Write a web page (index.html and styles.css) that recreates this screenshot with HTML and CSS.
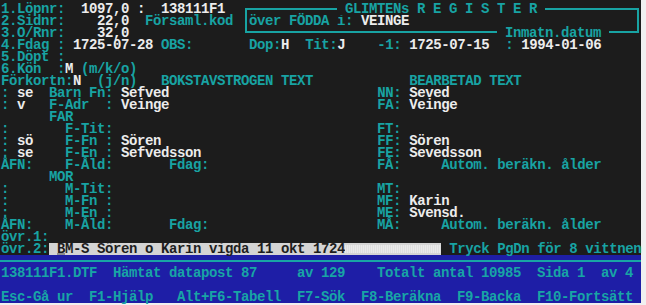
FILE: index.html
```
<!DOCTYPE html>
<html lang="sv">
<head>
<meta charset="utf-8">
<title>GLIMTENs REGISTER</title>
<link rel="stylesheet" href="styles.css">
</head>
<body>
<div class="screen">
  <div class="main">
    <div class="top">
      <div class="left">
        <div class="row"><span class="c">1.Löpnr:</span>  <span class="w">1097,0 :  138111F1</span></div>
        <div class="row"><span class="c">2.Sidnr:</span>    <span class="w">22,0</span>  <span class="c">Församl.kod</span></div>
        <div class="row"><span class="c">3.O/Rnr:</span>    <span class="w">32,0</span></div>
      </div>
      <div class="box">
        <span class="legend title"> GLIMTENs R E G I S T E R </span>
        <div class="row"><span class="c">över FÖDDA i: </span><span class="w">VEINGE</span></div>
        <span class="legend date"> Inmatn.datum </span>
      </div>
    </div>
    <div class="row"><span class="c">4.Fdag : </span><span class="w">1725-07-28</span> <span class="c">OBS:</span>       <span class="c">Dop:</span><span class="w">H</span>  <span class="c">Tit:</span><span class="w">J</span>    <span class="c">-1:</span> <span class="w">1725-07-15</span>  <span class="c">:</span> <span class="w">1994-01-06</span></div>
    <div class="row"><span class="c">5.Döpt :</span></div>
    <div class="row"><span class="c">6.Kön  :</span><span class="w">M</span> <span class="c">(m/k/o)</span></div>
    <div class="row"><span class="c">Förkortn:</span><span class="w">N</span>  <span class="c">(j/n)</span>   <span class="c">BOKSTAVSTROGEN TEXT</span>            <span class="c">BEARBETAD TEXT</span></div>
    <div class="row"><span class="c">:</span> <span class="w">se</span>  <span class="c">Barn Fn:</span> <span class="w">Sefved</span>                          <span class="c">NN:</span> <span class="w">Seved</span></div>
    <div class="row"><span class="c">:</span> <span class="w">v</span>   <span class="c">F-Adr  :</span> <span class="w">Veinge</span>                          <span class="c">FA:</span> <span class="w">Veinge</span></div>
    <div class="row">      <span class="c">FAR</span></div>
    <div class="row"><span class="c">:</span>       <span class="c">F-Tit:</span>                                 <span class="c">FT:</span></div>
    <div class="row"><span class="c">:</span> <span class="w">sö</span>    <span class="c">F-Fn :</span> <span class="w">Sören</span>                           <span class="c">FF:</span> <span class="w">Sören</span></div>
    <div class="row"><span class="c">:</span> <span class="w">se</span>    <span class="c">F-En :</span> <span class="w">Sefvedsson</span>                      <span class="c">FE:</span> <span class="w">Sevedsson</span></div>
    <div class="row"><span class="c">ÅFN:</span>    <span class="c">F-Åld:</span>       <span class="c">Fdag:</span>                     <span class="c">FÅ:</span>     <span class="c">Autom. beräkn. ålder</span></div>
    <div class="row">      <span class="c">MOR</span></div>
    <div class="row"><span class="c">:</span>       <span class="c">M-Tit:</span>                                 <span class="c">MT:</span></div>
    <div class="row"><span class="c">:</span>       <span class="c">M-Fn :</span>                                 <span class="c">MF:</span> <span class="w">Karin</span></div>
    <div class="row"><span class="c">:</span>       <span class="c">M-En :</span>                                 <span class="c">ME:</span> <span class="w">Svensd.</span></div>
    <div class="row"><span class="c">ÅFN:</span>    <span class="c">M-Åld:</span>       <span class="c">Fdag:</span>                     <span class="c">MÅ:</span>     <span class="c">Autom. beräkn. ålder</span></div>
    <div class="row"><span class="c">övr.1:</span></div>
    <div class="row"><span class="c">övr.2:</span><span class="field"> <span class="cursor">B</span>M-S Sören o Karin vigda 11 okt 1724<span class="rest">            </span></span> <span class="c">Tryck PgDn för 8 vittnen</span></div>
  </div>
  <div class="status">
    <div class="rule"></div>
    <div class="row">138111F1.DTF  Hämtat datapost 87     av 129    Totalt antal 10985  Sida 1  av 4</div>
    <div class="row"> </div>
    <div class="row">Esc-Gå ur  F1-Hjälp   Alt+F6-Tabell  F7-Sök  F8-Beräkna  F9-Backa  F10-Fortsätt</div>
  </div>
</div>
</body>
</html>
```

FILE: styles.css
```
* {
  margin: 0;
  padding: 0;
  box-sizing: border-box;
}

html,
body {
  background: #f0f0f0;
}

body {
  width: 646px;
  height: 305px;
  overflow: hidden;
}

.screen {
  width: 641px;
  background: #1c1c1c;
  font-family: "Liberation Mono", "DejaVu Sans Mono", monospace;
  font-size: 14px;
  letter-spacing: -0.4px;
  font-weight: bold;
  line-height: 12px;
  color: #ececec;
}

.main {
  padding: 3px 0 0 1px;
}

.row {
  height: 12px;
  white-space: pre;
}

.c {
  color: #18a3a3;
}

.w {
  color: #ececec;
}

.top {
  display: flex;
  height: 36px;
}

.left {
  width: 244px;
  flex: none;
}

.box {
  position: relative;
  width: 394px;
  height: 25px;
  margin-top: 5px;
  border: 2px solid #18a3a3;
  padding: 5px 0 4px 2px;
}

.legend {
  position: absolute;
  background: #1c1c1c;
  white-space: pre;
  color: #18a3a3;
  line-height: 12px;
  height: 12px;
}

.title {
  left: 90px;
  top: -7px;
}

.date {
  left: 250px;
  top: 17px;
}

.field {
  display: inline-block;
  vertical-align: top;
  height: 12px;
  background: #d4d4d4;
  color: #1e1e1e;
}

.cursor {
  display: inline-block;
  vertical-align: top;
  height: 12px;
  box-shadow: inset 0 -2px 0 #8c8c8c;
}

.rest {
  display: inline-block;
  vertical-align: top;
  height: 12px;
  background:
    linear-gradient(to bottom, #d4d4d4 0 2px, transparent 2px 10px, #d4d4d4 10px),
    repeating-linear-gradient(90deg, #e9e9e9 0 1px, #dedede 1px 2px);
}

.status {
  background: #1e1ea6;
  color: #18a5a5;
  padding: 5px 0 0 1px;
  height: 48px;
}

.rule {
  height: 2px;
  margin: 0 0 5px -1px;
  background: #18a5a5;
}
```
